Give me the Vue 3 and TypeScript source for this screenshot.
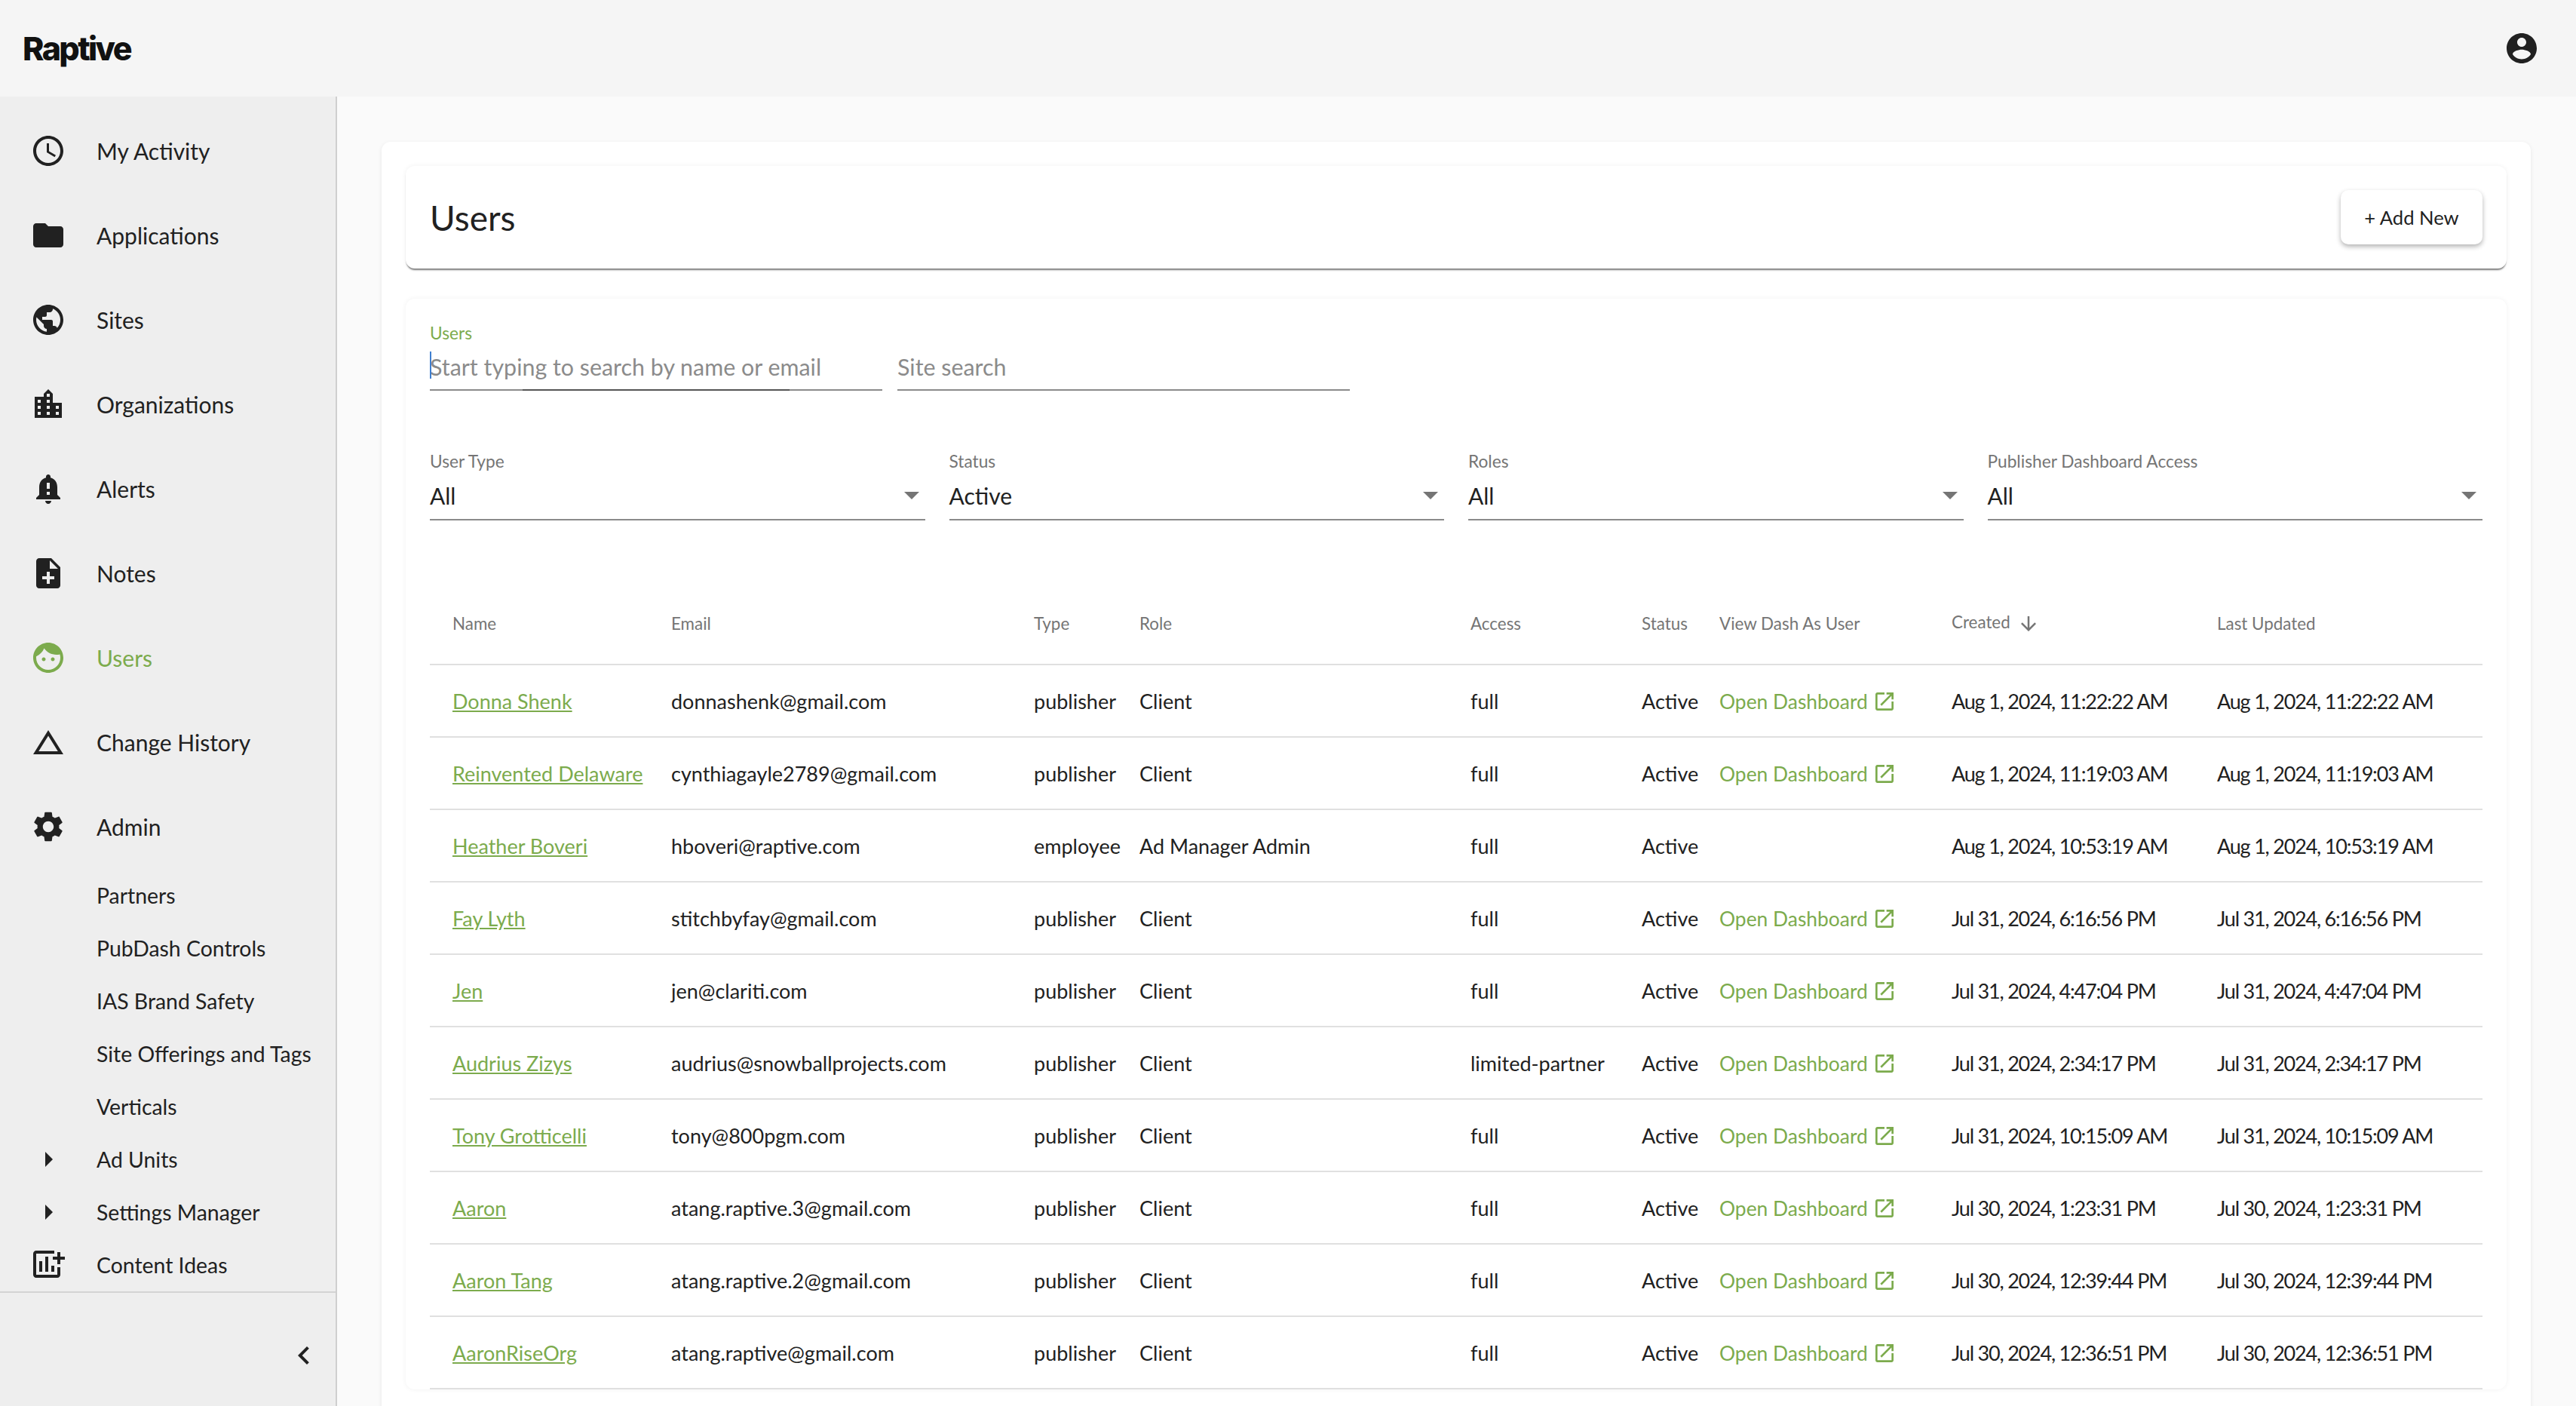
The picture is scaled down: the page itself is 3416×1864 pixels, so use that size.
<script setup lang="ts">
interface NavItem {
  label: string;
  icon?: string;
  active?: boolean;
  caret?: boolean;
}

const mainNav: NavItem[] = [
  {label: 'My Activity', icon: 'M11.99 2C6.47 2 2 6.48 2 12s4.47 10 9.99 10C17.52 22 22 17.52 22 12S17.52 2 11.99 2zM12 20c-4.42 0-8-3.58-8-8s3.58-8 8-8 8 3.58 8 8-3.58 8-8 8zm.5-13H11v6l5.25 3.15.75-1.23-4.5-2.67z'},
  {label: 'Applications', icon: 'M10 4H4c-1.1 0-1.99.9-1.99 2L2 18c0 1.1.9 2 2 2h16c1.1 0 2-.9 2-2V8c0-1.1-.9-2-2-2h-8l-2-2z'},
  {label: 'Sites', icon: 'M12 2C6.48 2 2 6.48 2 12s4.48 10 10 10 10-4.48 10-10S17.52 2 12 2zm-1 17.93c-3.95-.49-7-3.85-7-7.93 0-.62.08-1.21.21-1.79L9 15v1c0 1.1.9 2 2 2v1.93zm6.9-2.54c-.26-.81-1-1.39-1.9-1.39h-1v-3c0-.55-.45-1-1-1H8v-2h2c.55 0 1-.45 1-1V7h2c1.1 0 2-.9 2-2v-.41c2.93 1.19 5 4.06 5 7.41 0 2.08-.8 3.97-2.1 5.39z'},
  {label: 'Organizations', icon: 'M15 11V5l-3-3-3 3v2H3v14h18V11h-6zm-8 8H5v-2h2v2zm0-4H5v-2h2v2zm0-4H5V9h2v2zm6 8h-2v-2h2v2zm0-4h-2v-2h2v2zm0-4h-2V9h2v2zm0-4h-2V5h2v2zm6 12h-2v-2h2v2zm0-4h-2v-2h2v2z'},
  {label: 'Alerts', icon: 'M18 16v-5c0-3.07-1.64-5.64-4.5-6.32V4c0-.83-.67-1.5-1.5-1.5s-1.5.67-1.5 1.5v.68C7.63 5.36 6 7.93 6 11v5l-2 2v1h16v-1l-2-2zm-5 0h-2v-2h2v2zm0-4h-2V8h2v4zm-1 10c1.1 0 2-.9 2-2h-4c0 1.1.9 2 2 2z'},
  {label: 'Notes', icon: 'M14 2H6c-1.1 0-1.99.9-1.99 2L4 20c0 1.1.89 2 1.99 2H18c1.1 0 2-.9 2-2V8l-6-6zm2 14h-3v3h-2v-3H8v-2h3v-3h2v3h3v2zm-3-7V3.5L18.5 9H13z'},
  {label: 'Users', active: true, icon: 'M9 11.75c-.69 0-1.25.56-1.25 1.25s.56 1.25 1.25 1.25 1.25-.56 1.25-1.25-.56-1.25-1.25-1.25zm6 0c-.69 0-1.25.56-1.25 1.25s.56 1.25 1.25 1.25 1.25-.56 1.25-1.25-.56-1.25-1.25-1.25zM12 2C6.48 2 2 6.48 2 12s4.48 10 10 10 10-4.48 10-10S17.52 2 12 2zm0 18c-4.41 0-8-3.59-8-8 0-.29.02-.58.05-.86 2.36-1.05 4.23-2.98 5.21-5.37C11.07 8.33 14.05 10 17.42 10c.78 0 1.53-.09 2.25-.26.21.71.33 1.47.33 2.26 0 4.41-3.59 8-8 8z'},
  {label: 'Change History', icon: 'M12 7.77L18.39 18H5.61L12 7.77M12 4L2 20h20L12 4z'},
  {label: 'Admin', icon: 'M19.14 12.94c.04-.3.06-.61.06-.94 0-.32-.02-.64-.07-.94l2.03-1.58c.18-.14.23-.41.12-.61l-1.92-3.32c-.12-.22-.37-.29-.59-.22l-2.39.96c-.5-.38-1.03-.7-1.62-.94l-.36-2.54c-.04-.24-.24-.41-.48-.41h-3.84c-.24 0-.43.17-.47.41l-.36 2.54c-.59.24-1.13.57-1.62.94l-2.39-.96c-.22-.08-.47 0-.59.22L2.74 8.87c-.12.21-.08.47.12.61l2.03 1.58c-.05.3-.09.63-.09.94s.02.64.07.94l-2.03 1.58c-.18.14-.23.41-.12.61l1.92 3.32c.12.22.37.29.59.22l2.39-.96c.5.38 1.03.7 1.62.94l.36 2.54c.05.24.24.41.48.41h3.84c.24 0 .44-.17.47-.41l.36-2.54c.59-.24 1.13-.56 1.62-.94l2.39.96c.22.08.47 0 .59-.22l1.92-3.32c.12-.22.07-.47-.12-.61l-2.01-1.58zM12 15.6c-1.98 0-3.6-1.62-3.6-3.6s1.62-3.6 3.6-3.6 3.6 1.62 3.6 3.6-1.62 3.6-3.6 3.6z'},
];

const subNav: NavItem[] = [
  {label: 'Partners'},
  {label: 'PubDash Controls'},
  {label: 'IAS Brand Safety'},
  {label: 'Site Offerings and Tags'},
  {label: 'Verticals'},
  {label: 'Ad Units', caret: true},
  {label: 'Settings Manager', caret: true},
  {label: 'Content Ideas', icon: 'M4 2.5h12v2H4v14h14v-5h2v5c0 1.1-.9 2-2 2H4c-1.1 0-2-.9-2-2v-14c0-1.1.9-2 2-2zM18 3.5h2v3h3v2h-3v3h-2v-3h-3v-2h3zM6 9.5h2v7H6zM10 6.5h2v10h-2zM14 12.5h2v4h-2z'},
];

const filters = [
  {label: 'User Type', value: 'All'},
  {label: 'Status', value: 'Active'},
  {label: 'Roles', value: 'All'},
  {label: 'Publisher Dashboard Access', value: 'All'},
];

const rows = [
  {name: 'Donna Shenk', email: 'donnashenk@gmail.com', type: 'publisher', role: 'Client', access: 'full', dash: true, date: 'Aug 1, 2024, 11:22:22 AM'},
  {name: 'Reinvented Delaware', email: 'cynthiagayle2789@gmail.com', type: 'publisher', role: 'Client', access: 'full', dash: true, date: 'Aug 1, 2024, 11:19:03 AM'},
  {name: 'Heather Boveri', email: 'hboveri@raptive.com', type: 'employee', role: 'Ad Manager Admin', access: 'full', dash: false, date: 'Aug 1, 2024, 10:53:19 AM'},
  {name: 'Fay Lyth', email: 'stitchbyfay@gmail.com', type: 'publisher', role: 'Client', access: 'full', dash: true, date: 'Jul 31, 2024, 6:16:56 PM'},
  {name: 'Jen', email: 'jen@clariti.com', type: 'publisher', role: 'Client', access: 'full', dash: true, date: 'Jul 31, 2024, 4:47:04 PM'},
  {name: 'Audrius Zizys', email: 'audrius@snowballprojects.com', type: 'publisher', role: 'Client', access: 'limited-partner', dash: true, date: 'Jul 31, 2024, 2:34:17 PM'},
  {name: 'Tony Grotticelli', email: 'tony@800pgm.com', type: 'publisher', role: 'Client', access: 'full', dash: true, date: 'Jul 31, 2024, 10:15:09 AM'},
  {name: 'Aaron', email: 'atang.raptive.3@gmail.com', type: 'publisher', role: 'Client', access: 'full', dash: true, date: 'Jul 30, 2024, 1:23:31 PM'},
  {name: 'Aaron Tang', email: 'atang.raptive.2@gmail.com', type: 'publisher', role: 'Client', access: 'full', dash: true, date: 'Jul 30, 2024, 12:39:44 PM'},
  {name: 'AaronRiseOrg', email: 'atang.raptive@gmail.com', type: 'publisher', role: 'Client', access: 'full', dash: true, date: 'Jul 30, 2024, 12:36:51 PM'},
];
</script>

<template>
  <div class="page">
    <header class="topbar">
      <span class="logo">Raptive</span>
      <svg class="icon" viewBox="0 0 24 24">
        <path d="M12 2C6.48 2 2 6.48 2 12s4.48 10 10 10 10-4.48 10-10S17.52 2 12 2zm0 3c1.66 0 3 1.34 3 3s-1.34 3-3 3-3-1.34-3-3 1.34-3 3-3zm0 14.2c-2.5 0-4.71-1.28-6-3.22.03-1.99 4-3.08 6-3.08 1.99 0 5.97 1.09 6 3.08-1.29 1.94-3.5 3.22-6 3.22z"/>
      </svg>
    </header>

    <div class="body">
      <aside class="sidebar">
        <nav class="nav">
          <a v-for="item in mainNav" :key="item.label" class="nav-item" :class="{active: item.active}">
            <svg class="icon" viewBox="0 0 24 24"><path :d="item.icon"/></svg>
            <span>{{ item.label }}</span>
          </a>
          <a v-for="item in subNav" :key="item.label" class="nav-item sub">
            <svg v-if="item.caret" class="icon" viewBox="0 0 24 24"><path d="M10 17l5-5-5-5v10z"/></svg>
            <svg v-else-if="item.icon" class="icon" viewBox="0 0 24 24"><path :d="item.icon"/></svg>
            <span v-else class="icon"/>
            <span>{{ item.label }}</span>
          </a>
        </nav>
        <div class="collapse">
          <svg class="icon" viewBox="0 0 24 24"><path d="M15.41 7.41L14 6l-6 6 6 6 1.41-1.41L10.83 12z"/></svg>
        </div>
      </aside>

      <main class="main">
        <section class="sheet">
          <div class="title-card">
            <h1>Users</h1>
            <button class="add-btn">+ Add New</button>
          </div>

          <div class="list-card">
            <div class="search-row">
              <div class="field search focused">
                <label>Users</label>
                <div class="control">
                  <i class="caret"/>
                  <span class="placeholder">Start typing to search by name or email</span>
                </div>
              </div>
              <div class="field search">
                <label>&nbsp;</label>
                <div class="control">
                  <span class="placeholder site">Site search</span>
                </div>
              </div>
            </div>

            <div class="filter-row">
              <div v-for="f in filters" :key="f.label" class="field select">
                <label>{{ f.label }}</label>
                <div class="control">
                  <span>{{ f.value }}</span>
                  <i class="arrow"/>
                </div>
              </div>
            </div>

            <table class="users">
              <colgroup>
                <col class="c-name"><col class="c-email"><col class="c-type"><col class="c-role"><col class="c-access">
                <col class="c-status"><col class="c-dash"><col class="c-date"><col class="c-date2">
              </colgroup>
              <thead>
                <tr>
                  <th>Name</th>
                  <th>Email</th>
                  <th>Type</th>
                  <th>Role</th>
                  <th>Access</th>
                  <th>Status</th>
                  <th>View Dash As User</th>
                  <th>
                    Created
                    <svg class="sort" viewBox="0 0 24 24"><path d="M20 12l-1.41-1.41L13 16.17V4h-2v12.17l-5.58-5.59L4 12l8 8 8-8z"/></svg>
                  </th>
                  <th>Last Updated</th>
                </tr>
              </thead>
              <tbody>
                <tr v-for="row in rows" :key="row.email">
                  <td><a class="name-link">{{ row.name }}</a></td>
                  <td>{{ row.email }}</td>
                  <td>{{ row.type }}</td>
                  <td>{{ row.role }}</td>
                  <td>{{ row.access }}</td>
                  <td>Active</td>
                  <td>
                    <a v-if="row.dash" class="dash-link">
                      Open Dashboard
                      <svg viewBox="0 0 24 24"><path d="M19 19H5V5h7V3H5c-1.11 0-2 .9-2 2v14c0 1.1.89 2 2 2h14c1.1 0 2-.9 2-2v-7h-2v7zM14 3v2h3.59l-9.83 9.83 1.41 1.41L19 6.41V10h2V3h-7z"/></svg>
                    </a>
                  </td>
                  <td class="date">{{ row.date }}</td>
                  <td class="date">{{ row.date }}</td>
                </tr>
              </tbody>
            </table>
          </div>
        </section>
      </main>
    </div>
  </div>
</template>

<style>
html, body {
  margin: 0;
  height: 100%;
  overflow: hidden;
}
</style>

<style scoped>
.page {
  display: flex;
  flex-direction: column;
  height: 100vh;
  font-family: Lato, "Noto Sans", sans-serif;
  font-size: 27px;
  color: #212121;
  background: #fafafa;
}

.topbar {
  flex: 0 0 128px;
  display: flex;
  align-items: center;
  justify-content: space-between;
  padding: 0 48px 0 30px;
  background: #f5f5f5;
}

.logo {
  font-family: Inter, sans-serif;
  font-size: 43px;
  font-weight: 800;
  letter-spacing: -2.6px;
  color: #111;
}

.icon {
  flex: none;
  width: 48px;
  height: 48px;
  fill: #212121;
}

.body {
  flex: 1;
  display: flex;
  min-height: 0;
}

.sidebar {
  flex: 0 0 447px;
  box-sizing: border-box;
  display: flex;
  flex-direction: column;
  background: #eeeeee;
  border-right: 2px solid #cfcfcf;
}

.nav {
  flex: 0 0 1585px;
  box-sizing: border-box;
  padding-top: 16px;
  border-bottom: 2px solid #d4d4d4;
}

.nav-item {
  display: flex;
  align-items: center;
  height: 112px;
  padding-left: 40px;
  gap: 40px;
  font-size: 30px;
}

.nav-item.active {
  color: #7cab4d;
}

.nav-item.active .icon {
  fill: #7cab4d;
}

.nav-item.sub {
  height: 70px;
  font-size: 28.4px;
}

.collapse {
  display: flex;
  justify-content: flex-end;
  padding: 59px 18px 0 0;
}

.main {
  flex: 1;
  min-width: 0;
  padding: 60px 60px 0 59px;
  overflow: hidden;
}

.sheet {
  box-sizing: border-box;
  min-height: 100%;
  padding: 32px;
  background: #fff;
  border-radius: 12px 12px 0 0;
  box-shadow: 0 2px 6px rgba(0, 0, 0, 0.08);
}

.title-card {
  box-sizing: border-box;
  display: flex;
  align-items: center;
  justify-content: space-between;
  height: 136px;
  padding: 0 32px;
  background: #fff;
  border-radius: 12px;
  box-shadow: 0 3px 2px -1px rgba(0, 0, 0, 0.5), 0 0 6px rgba(0, 0, 0, 0.06);
}

.title-card h1 {
  margin: 0;
  font-size: 46px;
  font-weight: 400;
}

.add-btn {
  width: 188px;
  height: 72px;
  border: 0;
  border-radius: 10px;
  background: #fff;
  color: #212121;
  font: inherit;
  font-size: 25.6px;
  box-shadow: 0 3px 6px rgba(0, 0, 0, 0.3);
}

.list-card {
  margin-top: 40px;
  padding: 32px 32px 0;
  background: #fff;
  border-radius: 12px;
  box-shadow: 0 0 6px rgba(0, 0, 0, 0.06);
}

.search-row {
  display: flex;
  gap: 20px;
}

.filter-row {
  display: flex;
  gap: 32px;
  margin-top: 80px;
}

.field label {
  display: block;
  height: 28px;
  line-height: 28px;
  font-size: 22.7px;
  color: #757575;
}

.field .control {
  position: relative;
  display: flex;
  align-items: center;
  height: 60px;
  border-bottom: 2px solid #8a8a8a;
}

.search {
  width: 600px;
}

.search.focused label {
  color: #7cab4d;
}

.search.focused .control::after {
  content: "";
  position: absolute;
  left: 123px;
  bottom: -2px;
  width: 354px;
  height: 2px;
  background: #555;
}

.placeholder {
  color: #8b8b8b;
  font-size: 30.4px;
}

.caret {
  position: absolute;
  left: 0;
  top: 10px;
  width: 2px;
  height: 36px;
  background: #3f7fd0;
}

.select {
  flex: 1;
}

.select .control {
  justify-content: space-between;
  height: 62px;
  font-size: 30px;
}

.arrow {
  width: 0;
  height: 0;
  margin-right: 8px;
  border-left: 10px solid transparent;
  border-right: 10px solid transparent;
  border-top: 10px solid #757575;
}

.users {
  width: 100%;
  margin-top: 82px;
  table-layout: fixed;
  border-collapse: collapse;
}

.c-name { width: 320px; }
.c-email { width: 481px; }
.c-type { width: 140px; }
.c-role { width: 439px; }
.c-access { width: 227px; }
.c-status { width: 103px; }
.c-dash { width: 308px; }
.c-date { width: 352px; }

.users th,
.users td {
  padding: 0;
  text-align: left;
  white-space: nowrap;
  border-bottom: 2px solid #e0e0e0;
}

.users th:first-child,
.users td:first-child {
  padding-left: 30px;
}

.users th {
  height: 108px;
  font-size: 22.4px;
  font-weight: 400;
  color: #757575;
}

.users td {
  height: 94px;
}

.users td.date {
  letter-spacing: -1.2px;
}

.sort {
  width: 30px;
  height: 30px;
  margin-left: 4px;
  vertical-align: -9px;
  fill: #757575;
}

.name-link {
  color: #7cab4d;
  text-decoration: underline;
}

.dash-link {
  display: inline-flex;
  align-items: center;
  gap: 6px;
  font-size: 26.4px;
  color: #7cab4d;
}

.dash-link svg {
  width: 32px;
  height: 32px;
  fill: #7cab4d;
}
</style>
